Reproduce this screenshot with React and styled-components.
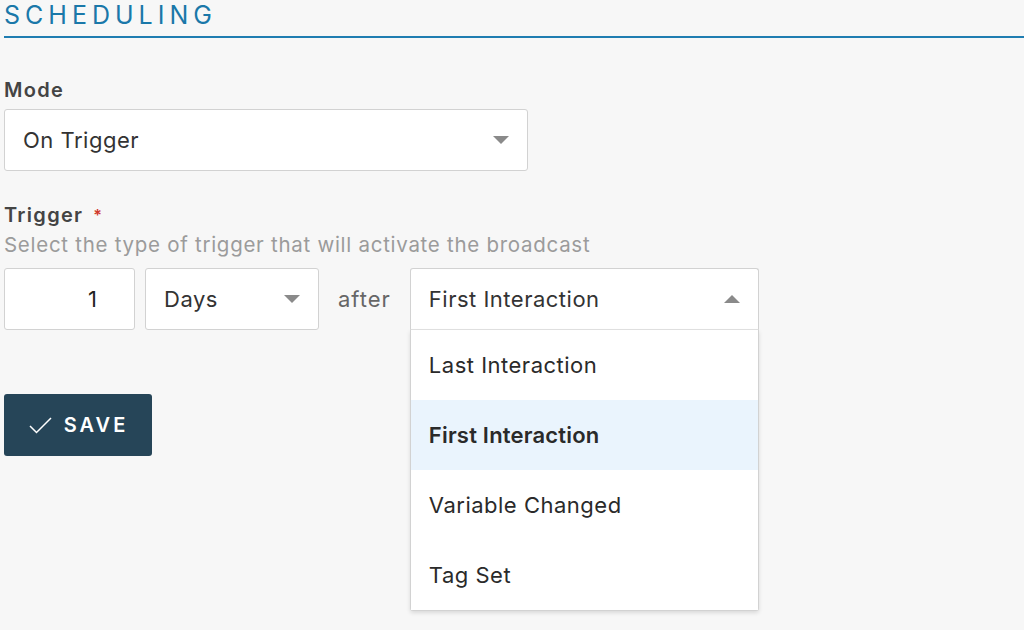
import React from 'react';
import styled, { createGlobalStyle } from 'styled-components';

const GlobalStyle = createGlobalStyle`
  html, body {
    margin: 0;
    padding: 0;
    background: #f7f7f7;
    font-family: Inter, "Open Sans", sans-serif;
    color: #333;
  }
`;

const Page = styled.div`
  display: flex;
  flex-direction: column;
  padding: 0 0 0 4px;
  height: 630px;
  overflow: hidden;
`;

const SectionTitle = styled.h2`
  margin: 0;
  padding: 1px 0 7px;
  font-size: 25px;
  font-weight: 400;
  letter-spacing: 5px;
  line-height: 28px;
  color: #1a78a9;
  border-bottom: 2px solid #1f7db1;
`;

const Field = styled.div`
  display: flex;
  flex-direction: column;
  margin-top: ${props => props.$top || '0'};
`;

const Label = styled.label`
  font-size: 20px;
  font-weight: 600;
  color: #444;
  line-height: 24px;
  letter-spacing: 1.3px;
  margin-bottom: ${props => props.$gap || '8px'};
`;

const Required = styled.span`
  color: #d0392b;
  margin-left: 10px;
  font-size: 16px;
  vertical-align: top;
`;

const Help = styled.div`
  font-size: 20.5px;
  color: #9b9b9b;
  line-height: 24px;
  letter-spacing: 0.72px;
  margin-bottom: 11px;
`;

const Caret = styled.span`
  width: 0;
  height: 0;
  border-left: 8.5px solid transparent;
  border-right: 8.5px solid transparent;
  ${props => props.$up
    ? 'border-bottom: 8px solid #8a8a8a;'
    : 'border-top: 8px solid #8a8a8a;'}
`;

const Select = styled.div`
  display: flex;
  align-items: center;
  justify-content: space-between;
  box-sizing: border-box;
  width: ${props => props.$width};
  height: 62px;
  padding: 0 18px 0 18px;
  background: #fff;
  border: 1px solid #d2d2d2;
  border-radius: 3px;
  font-size: 22px;
  letter-spacing: 0.5px;
  color: #333;
`;

const Row = styled.div`
  display: flex;
  align-items: center;
  gap: 10px;
`;

const NumberBox = styled.div`
  box-sizing: border-box;
  width: 131px;
  height: 62px;
  padding-right: 37px;
  display: flex;
  align-items: center;
  justify-content: flex-end;
  background: #fff;
  border: 1px solid #d2d2d2;
  border-radius: 3px;
  font-size: 22px;
  color: #222;
`;

const After = styled.span`
  font-size: 22px;
  letter-spacing: 1px;
  color: #666;
  margin: 0 9px 0 9px;
`;

const DropdownWrap = styled.div`
  position: relative;
  width: 349px;
`;

const OpenSelect = styled(Select)`
  border-radius: 3px 3px 0 0;
  border-bottom-color: #e2e2e2;
`;

const Menu = styled.ul`
  position: absolute;
  top: 62px;
  left: 0;
  right: 0;
  margin: 0;
  padding: 0;
  list-style: none;
  background: #fff;
  border: 1px solid #d2d2d2;
  border-top: none;
  border-radius: 0 0 3px 3px;
  box-shadow: 0 2px 4px rgba(0, 0, 0, 0.12);
`;

const MenuItem = styled.li`
  height: 70px;
  display: flex;
  align-items: center;
  padding-left: 18px;
  font-size: 22px;
  letter-spacing: ${props => props.$active ? '0.2px' : '0.5px'};
  color: #2a2a2a;
  background: ${props => props.$active ? '#eaf4fd' : '#fff'};
  font-weight: ${props => props.$active ? 600 : 400};
`;

const SaveButton = styled.button`
  display: flex;
  align-items: center;
  justify-content: center;
  gap: 12px;
  width: 148px;
  height: 62px;
  margin-top: 64px;
  padding: 0 0 0 1px;
  border: none;
  border-radius: 3px;
  background: #264558;
  color: #fff;
  font-family: Inter, "Open Sans", sans-serif;
  font-size: 20px;
  font-weight: 600;
  letter-spacing: 3px;
  cursor: pointer;
`;

const CheckIcon = () => (
  <svg width="23" height="17" viewBox="0 0 23 17" fill="none">
    <path d="M1 9 L7.5 15.5 L22 1" stroke="#fff" strokeWidth="1.5" />
  </svg>
);

const options = ['Last Interaction', 'First Interaction', 'Variable Changed', 'Tag Set'];

export default function App() {
  return (
    <>
      <GlobalStyle />
      <Page>
        <SectionTitle>SCHEDULING</SectionTitle>
        <Field $top="40px">
          <Label $gap="7px">Mode</Label>
          <Select $width="524px">
            On Trigger
            <Caret />
          </Select>
        </Field>
        <Field $top="32px">
          <Label $gap="6px">Trigger<Required>*</Required></Label>
          <Help>Select the type of trigger that will activate the broadcast</Help>
          <Row>
            <NumberBox>1</NumberBox>
            <Select $width="174px">
              Days
              <Caret />
            </Select>
            <After>after</After>
            <DropdownWrap>
              <OpenSelect $width="349px">
                First Interaction
                <Caret $up />
              </OpenSelect>
              <Menu>
                {options.map(o => (
                  <MenuItem key={o} $active={o === 'First Interaction'}>{o}</MenuItem>
                ))}
              </Menu>
            </DropdownWrap>
          </Row>
        </Field>
        <SaveButton>
          <CheckIcon />
          SAVE
        </SaveButton>
      </Page>
    </>
  );
}
